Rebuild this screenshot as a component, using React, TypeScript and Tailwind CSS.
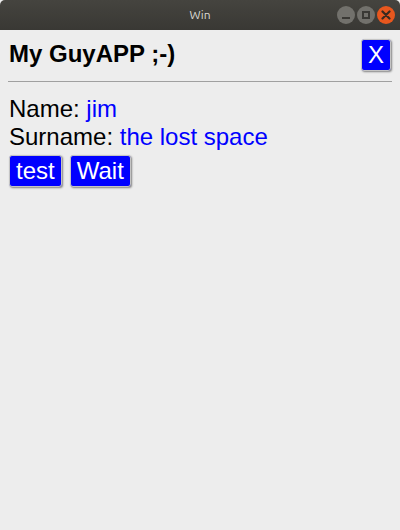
export default function App() {
  return (
    <div className="w-[400px] h-[530px] flex flex-col bg-[#ededed] font-['Liberation_Sans',Arial,sans-serif]">
      {/* Window title bar */}
      <div className="h-[30px] shrink-0 flex items-center bg-gradient-to-b from-[#45443f] to-[#393834] rounded-t-[5px] relative">
        <span className="flex-1 text-center text-[12px] text-[#dcd9d2] font-['Ubuntu','DejaVu_Sans',sans-serif]">Win</span>
        <div className="absolute right-[5px] top-[6px] flex gap-[2px]">
          <span className="w-[18px] h-[18px] rounded-full bg-[#72716c] flex items-end justify-center pb-[5px]">
            <span className="w-[8px] h-[2px] bg-[#3a3935]" />
          </span>
          <span className="w-[18px] h-[18px] rounded-full bg-[#72716c] flex items-center justify-center">
            <span className="w-[8px] h-[8px] border-2 border-[#3a3935]" />
          </span>
          <span className="w-[18px] h-[18px] rounded-full bg-[#e8571e] flex items-center justify-center">
            <svg width="10" height="10" viewBox="0 0 10 10">
              <path d="M1.5 1.5 L8.5 8.5 M8.5 1.5 L1.5 8.5" stroke="#3a2a20" strokeWidth="2.2" strokeLinecap="round" />
            </svg>
          </span>
        </div>
      </div>

      {/* Content */}
      <div className="px-[8px] pt-[9px] text-black">
        <div className="flex items-start justify-between">
          <h1 className="text-[24px] font-bold leading-[30px] pl-[1px]">My GuyAPP ;-)</h1>
          <button className="h-[32px] px-[6px] bg-[#0000ff] text-white text-[24px] leading-none border border-[#c4c4c4] rounded-[3px] shadow-[1px_1px_2px_rgba(0,0,0,0.45)] mr-[1px]">
            X
          </button>
        </div>
        <hr className="mt-[10px] border-t border-[#a0a0a0]" />
        <div className="mt-[13px] text-[24px] leading-[28px] pl-[1px]">
          <div>
            Name: <span className="text-[#0000ff]">jim</span>
          </div>
          <div>
            Surname: <span className="text-[#0000ff]">the lost space</span>
          </div>
        </div>
        <div className="mt-[4px] flex gap-[8px] pl-[1px]">
          <button className="h-[32px] px-[6px] bg-[#0000ff] text-white text-[24px] leading-none border border-[#c4c4c4] rounded-[3px] shadow-[1px_1px_2px_rgba(0,0,0,0.45)]">
            test
          </button>
          <button className="h-[32px] px-[6px] bg-[#0000ff] text-white text-[24px] leading-none border border-[#c4c4c4] rounded-[3px] shadow-[1px_1px_2px_rgba(0,0,0,0.45)]">
            Wait
          </button>
        </div>
      </div>
    </div>
  );
}
